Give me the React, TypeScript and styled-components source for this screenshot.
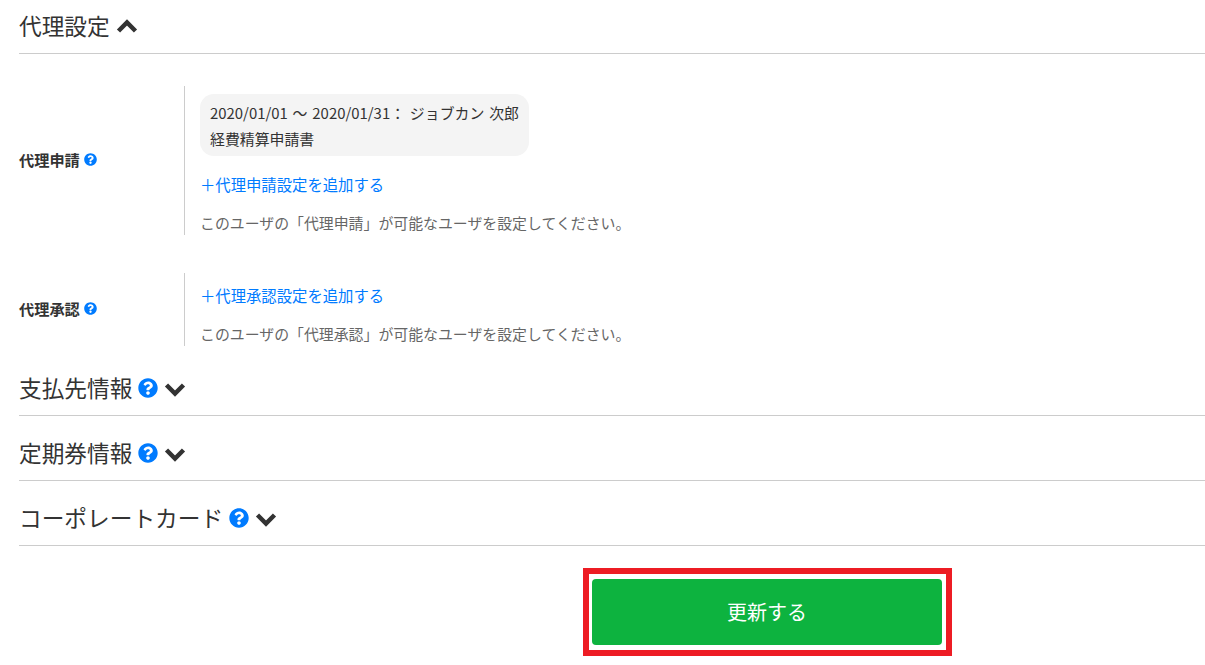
import styled, { createGlobalStyle } from 'styled-components';
import { FaQuestionCircle } from 'react-icons/fa';

const GlobalStyle = createGlobalStyle`
  html, body {
    margin: 0;
    padding: 0;
    background: #fff;
    overflow: hidden;
  }
  body {
    font-family: "Noto Sans CJK JP", "Noto Sans", sans-serif;
    color: #333;
  }
`;

interface SectionProps {
  title: string;
  help?: boolean;
  open?: boolean;
  height: number;
}

function SectionHeader({ title, help, open, height }: SectionProps): JSX.Element {
  return (
    <Header height={height}>
      <HeaderTitle>{title}</HeaderTitle>
      {help && <HelpIcon size={20} />}
      <Chevron viewBox="0 0 22 14" $open={open}>
        <path
          d={open ? 'M2.5 12 L11 3.5 L19.5 12' : 'M2.5 2 L11 10.5 L19.5 2'}
          fill="none"
          stroke="currentColor"
          strokeWidth="4.5"
        />
      </Chevron>
    </Header>
  );
}

export default function App(): JSX.Element {
  return (
    <Page>
      <GlobalStyle />
      <SectionHeader title="代理設定" open height={54} />
      <Rows>
        <Row>
          <Label>
            代理申請 <SmallHelp size={13} />
          </Label>
          <Content>
            <Bubble>
              <div>2020/01/01 ～ 2020/01/31： ジョブカン 次郎</div>
              <div>経費精算申請書</div>
            </Bubble>
            <AddLink href="#">＋代理申請設定を追加する</AddLink>
            <Note>このユーザの「代理申請」が可能なユーザを設定してください。</Note>
          </Content>
        </Row>
        <Row>
          <Label>
            代理承認 <SmallHelp size={13} />
          </Label>
          <Content>
            <AddLink href="#">＋代理承認設定を追加する</AddLink>
            <Note>このユーザの「代理承認」が可能なユーザを設定してください。</Note>
          </Content>
        </Row>
      </Rows>
      <SectionHeader title="支払先情報" help height={70} />
      <SectionHeader title="定期券情報" help height={65} />
      <SectionHeader title="コーポレートカード" help height={65} />
      <Actions>
        <Highlight>
          <SubmitButton type="button">更新する</SubmitButton>
        </Highlight>
      </Actions>
    </Page>
  );
}

const Page = styled.div`
  width: 1205px;
  height: 665px;
  box-sizing: border-box;
  padding-left: 19px;
  overflow: hidden;
`;

const Header = styled.div<{ height: number }>`
  height: ${({ height }): number => height}px;
  box-sizing: border-box;
  display: flex;
  align-items: flex-end;
  gap: 5px;
  padding-bottom: 10px;
  border-bottom: 1px solid #ccc;
`;

const HeaderTitle = styled.span`
  font-size: 22.7px;
  line-height: 32px;
  color: #333;
  margin-bottom: 1px;
`;

const HelpIcon = styled(FaQuestionCircle)`
  color: #007bff;
  margin: 0 0 7px 1px;
`;

const Chevron = styled.svg<{ $open?: boolean }>`
  width: 22px;
  height: 14px;
  color: #333;
  margin-left: 1px;
  margin-bottom: ${({ $open }): number => ($open ? 10 : 8)}px;
`;

const Rows = styled.div`
  display: flex;
  flex-direction: column;
  gap: 38px;
  padding-top: 32px;
`;

const Row = styled.div`
  display: flex;
  align-items: stretch;
`;

const Label = styled.div`
  width: 165px;
  flex: none;
  display: flex;
  align-items: center;
  gap: 4px;
  padding-bottom: 3px;
  font-size: 15.2px;
  font-weight: 700;
  color: #333;
`;

const SmallHelp = styled(FaQuestionCircle)`
  color: #007bff;
  margin-top: 1px;
`;

const Content = styled.div`
  border-left: 1px solid #ccc;
  padding: 7px 0 0 15px;
  display: flex;
  flex-direction: column;
  align-items: flex-start;
`;

const Bubble = styled.div`
  box-sizing: border-box;
  width: 329px;
  height: 62px;
  padding: 6px 10px;
  margin: 1px 0 13px;
  background: #f4f4f4;
  border-radius: 14px;
  font-size: 14.9px;
  word-spacing: 1.5px;
  line-height: 26px;
  white-space: nowrap;
  color: #333;
`;

const AddLink = styled.a`
  font-size: 15.35px;
  line-height: 30px;
  color: #007bff;
  text-decoration: none;
`;

const Note = styled.p`
  margin: 11px 0 0;
  font-size: 14.9px;
  line-height: 25px;
  color: #666;
  white-space: nowrap;
`;

const Actions = styled.div`
  padding: 22px 0 0 564px;
`;

const Highlight = styled.div`
  box-sizing: border-box;
  width: 369px;
  height: 88px;
  border: 6px solid #ed1c24;
  padding: 5px 3px;
`;

const SubmitButton = styled.button`
  display: block;
  width: 350px;
  height: 66px;
  padding: 0 0 2px;
  border: none;
  border-radius: 4px;
  background: #0db33f;
  color: #fff;
  font-family: inherit;
  font-size: 20px;
`;
